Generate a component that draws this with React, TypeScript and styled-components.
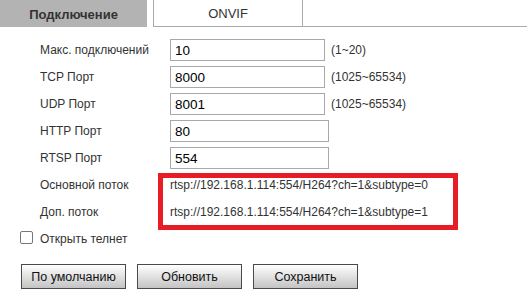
import React from "react";
import styled, { createGlobalStyle } from "styled-components";

const GlobalStyle = createGlobalStyle`
  body {
    margin: 0;
    background: #fff;
    font-family: "Liberation Sans", Arial, sans-serif;
    color: #333;
  }
`;

const fields = [
  { label: "Макс. подключений", value: "10", hint: "(1~20)" },
  { label: "TCP Порт", value: "8000", hint: "(1025~65534)" },
  { label: "UDP Порт", value: "8001", hint: "(1025~65534)" },
  { label: "HTTP Порт", value: "80" },
  { label: "RTSP Порт", value: "554" },
];

const streams = [
  { label: "Основной поток", url: "rtsp://192.168.1.114:554/H264?ch=1&subtype=0" },
  { label: "Доп. поток", url: "rtsp://192.168.1.114:554/H264?ch=1&subtype=1" },
];

export default function App() {
  return (
    <Page>
      <GlobalStyle />
      <TabBar>
        <Tab active>Подключение</Tab>
        <Tab>ONVIF</Tab>
        <TabFiller />
      </TabBar>
      <Form>
        {fields.map((f) => (
          <Row key={f.label}>
            <Label>{f.label}</Label>
            <Input defaultValue={f.value} narrow={!!f.hint} />
            {f.hint && <Hint>{f.hint}</Hint>}
          </Row>
        ))}
        <Streams>
          {streams.map((s) => (
            <Row key={s.label}>
              <Label>{s.label}</Label>
              <Url>{s.url}</Url>
            </Row>
          ))}
          <Highlight />
        </Streams>
        <CheckRow>
          <Check type="checkbox" />
          <span>Открыть телнет</span>
        </CheckRow>
      </Form>
      <Buttons>
        <Button>По умолчанию</Button>
        <Button>Обновить</Button>
        <Button>Сохранить</Button>
      </Buttons>
    </Page>
  );
}

const Page = styled.div`
  width: 527px;
  height: 300px;
  overflow: hidden;
`;

const TabBar = styled.div`
  display: flex;
  align-items: flex-start;
  height: 28px;
`;

const Tab = styled.div<{ active?: boolean }>`
  box-sizing: border-box;
  display: flex;
  align-items: center;
  justify-content: center;
  height: ${(p) => (p.active ? "27px" : "27px")};
  width: ${(p) => (p.active ? "147px" : "150px")};
  margin-right: ${(p) => (p.active ? "6px" : "0")};
  background: ${(p) => (p.active ? "#b3b3b3" : "#fff")};
  border: ${(p) => (p.active ? "none" : "1px solid #aaa")};
  border-top: none;
  font-size: 13px;
  font-weight: ${(p) => (p.active ? "bold" : "normal")};
  color: #333;
  padding-top: 1px;
`;

const TabFiller = styled.div`
  flex: 1;
  height: 27px;
  box-sizing: border-box;
  border-bottom: 1px solid #aaa;
`;

const Form = styled.div`
  padding-top: 11px;
  font-size: 12px;
`;

const Row = styled.div`
  display: flex;
  align-items: center;
  height: 22px;
  margin-bottom: 5px;
  padding-left: 40px;
`;

const Label = styled.span`
  width: 130px;
  flex: none;
`;

const Input = styled.input<{ narrow?: boolean }>`
  box-sizing: border-box;
  width: ${(p) => (p.narrow ? "155px" : "159px")};
  height: 22px;
  border: 1px solid #a9a9a9;
  padding: 0 4px;
  font-family: "Liberation Sans", Arial, sans-serif;
  font-size: 13.5px;
  color: #000;
  outline: none;
`;

const Hint = styled.span`
  margin-left: 6px;
`;

const Streams = styled.div`
  position: relative;
`;

const Url = styled.span`
  color: #333;
`;

const Highlight = styled.div`
  position: absolute;
  left: 158px;
  top: -1px;
  width: 300px;
  height: 57px;
  box-sizing: border-box;
  border: 5px solid #e81c24;
  pointer-events: none;
`;

const CheckRow = styled.label`
  display: flex;
  align-items: center;
  gap: 7px;
  height: 22px;
  padding-left: 20px;
`;

const Check = styled.input`
  appearance: none;
  box-sizing: border-box;
  margin: 0;
  width: 13px;
  height: 13px;
  border: 1px solid #777;
  border-radius: 2px;
  background: #fff;
  position: relative;
  top: -2px;
`;

const Buttons = styled.div`
  display: flex;
  gap: 11px;
  padding: 14px 0 0 21px;
`;

const Button = styled.button`
  box-sizing: border-box;
  width: 105px;
  height: 25px;
  border: 1px solid #4a4a4a;
  background: linear-gradient(#ffffff, #e4e4e4 45%, #c4c4c4);
  font-family: "Liberation Sans", Arial, sans-serif;
  font-size: 12.5px;
  color: #111;
  padding: 0;
`;
